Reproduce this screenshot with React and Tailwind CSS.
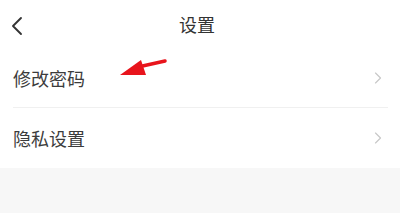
import { ChevronLeft, ChevronRight } from 'lucide-react';

const rows = ['修改密码', '隐私设置'];

export default function App() {
  return (
    <div className="w-[400px] h-[213px] bg-[#f7f7f7] overflow-hidden" style={{ fontFamily: '"Noto Sans CJK SC", "Noto Sans", sans-serif' }}>
      <div className="bg-white">
        {/* header */}
        <div className="relative h-[48px] flex items-center justify-center">
          <ChevronLeft size={32} strokeWidth={1.4} className="absolute left-[1px] top-[10px] text-[#333]" />
          <span className="text-[18px] text-[#333] leading-none -ml-[6px]">设置</span>
        </div>

        {/* list */}
        <div className="pl-[13px] pr-[12px]">
          {rows.map((label, i) => (
            <div
              key={label}
              className={`relative h-[60px] flex items-center justify-between ${i === 0 ? 'border-b border-[#f0f0f0]' : ''}`}
            >
              <span className="text-[18px] text-[#3c3c3c] leading-none">{label}</span>
              <ChevronRight size={20} strokeWidth={1.4} className="text-[#c8c8c8]" />
              {i === 0 && (
                <svg className="absolute left-[92px] top-[4px]" width="64" height="30" viewBox="0 0 64 30">
                  <line x1="60" y1="9" x2="33" y2="15" stroke="#e8141c" strokeWidth="3.5" strokeLinecap="round" />
                  <polygon points="15,23 36,8 41,23" fill="#e8141c" />
                </svg>
              )}
            </div>
          ))}
        </div>
      </div>
    </div>
  );
}
